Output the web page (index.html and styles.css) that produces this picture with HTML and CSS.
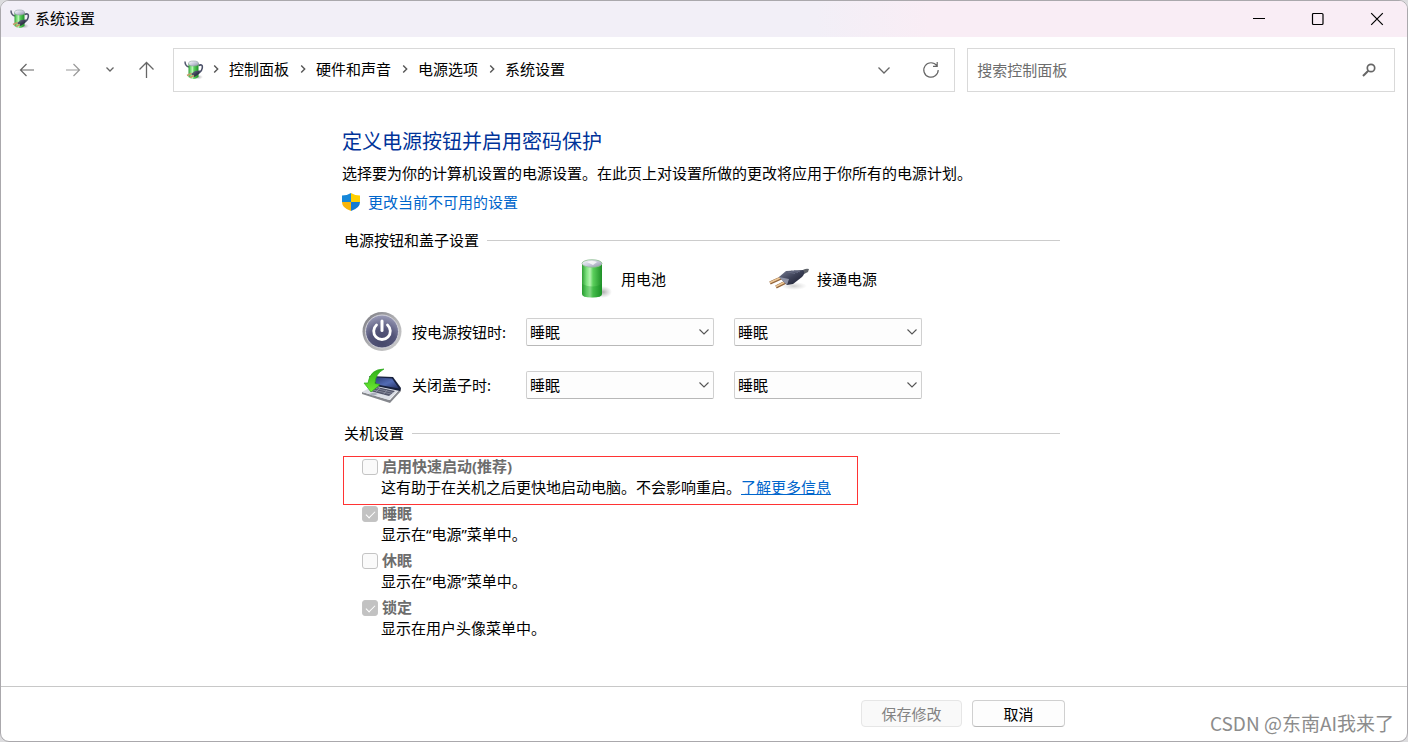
FILE: index.html
```html
<!DOCTYPE html>
<html lang="zh-CN">
<head>
<meta charset="utf-8">
<meta name="viewport" content="width=device-width, initial-scale=1">
<title>系统设置</title>
<link rel="stylesheet" href="styles.css">
</head>
<body>
<svg class="defs" aria-hidden="true">
  <defs>
    <linearGradient id="green" x1="0" x2="1" y1="0" y2="0">
      <stop offset="0" stop-color="#2f9e35"/><stop offset=".22" stop-color="#7be07c"/><stop offset=".4" stop-color="#b5f3b0"/><stop offset=".55" stop-color="#5bd05c"/><stop offset="1" stop-color="#1e8f27"/>
    </linearGradient>
    <linearGradient id="cap" x1="0" x2="1" y1="0" y2="1">
      <stop offset="0" stop-color="#ffffff"/><stop offset=".5" stop-color="#c9cbdc"/><stop offset="1" stop-color="#8f92a8"/>
    </linearGradient>
    <radialGradient id="shade"><stop offset="0" stop-color="#777" stop-opacity=".6"/><stop offset="1" stop-color="#999" stop-opacity="0"/></radialGradient>
    <linearGradient id="plug" x1="0" x2="1" y1="0" y2="1">
      <stop offset="0" stop-color="#7b8096"/><stop offset=".5" stop-color="#3c4056"/><stop offset="1" stop-color="#15182a"/>
    </linearGradient>
    <linearGradient id="ring" x1="0" x2="1" y1="0" y2="1">
      <stop offset="0" stop-color="#77777e"/><stop offset=".5" stop-color="#b0b0b3"/><stop offset="1" stop-color="#cfcfcf"/>
    </linearGradient>
    <radialGradient id="disc" cx=".5" cy=".85" r=".85">
      <stop offset="0" stop-color="#46486b"/><stop offset=".5" stop-color="#55567a"/><stop offset="1" stop-color="#9b9cb8"/>
    </radialGradient>
    <linearGradient id="screen" x1="0" x2="1" y1="0" y2="1">
      <stop offset="0" stop-color="#28366e"/><stop offset=".55" stop-color="#526bb4"/><stop offset="1" stop-color="#222e60"/>
    </linearGradient>
    <linearGradient id="arrow" x1="0" x2="0" y1="0" y2="1">
      <stop offset="0" stop-color="#2fae1a"/><stop offset="1" stop-color="#70ee32"/>
    </linearGradient>
    <symbol id="power-options" viewBox="0 0 20 20">
      <ellipse cx="14" cy="17" rx="5" ry="2.5" fill="url(#shade)"/>
      <path d="M1 1.500Q1 6 5 7" fill="none" stroke="#555a70" stroke-width="1.500"/>
      <path d="M14.500 5.500Q19 3.500 18.300 8Q18 11 15 13" fill="none" stroke="#4b5068" stroke-width="1.600"/>
      <path d="M4.500 3.500V17Q9.500 21 14.500 17V3.500Z" fill="url(#green)"/>
      <ellipse cx="9.500" cy="3.500" rx="5" ry="2.500" fill="url(#cap)" stroke="#8b9ca0" stroke-width=".6"/>
      <path d="M7 14L11 11L16 10.500L15 14L10.500 17Z" fill="url(#plug)"/>
      <path d="M3 15.500L7.500 13.500M6 17.500L10 15.500" stroke="#c79c69" stroke-width="1.500"/>
    </symbol>
    <symbol id="combo-arrow" viewBox="0 0 12 12"><path d="M1.500 3.500L6 8L10.500 3.500" fill="none" stroke="#555" stroke-width="1.100"/></symbol>
    <symbol id="crumb-arrow" viewBox="0 0 10 10"><path d="M3.200 1.500L6.700 5L3.200 8.500" fill="none" stroke="#555" stroke-width="1.400"/></symbol>
  </defs>
</svg>
<div class="window">
  <header class="titlebar">
    <svg class="app-icon" aria-hidden="true"><use href="#power-options"/></svg>
    <span class="titlebar-text">系统设置</span>
    <div class="window-buttons">
      <button type="button" aria-label="最小化"><svg width="14" height="14"><path d="M1 6.500H13" stroke="#000"/></svg></button>
      <button type="button" aria-label="最大化"><svg width="14" height="14"><rect x="1.500" y="1.500" width="10.500" height="11" rx="1" fill="none" stroke="#000" stroke-width="1.200"/></svg></button>
      <button type="button" aria-label="关闭"><svg width="14" height="14"><path d="M1.200 1.200L12.800 12.800M12.800 1.200L1.200 12.800" stroke="#000" stroke-width="1.200"/></svg></button>
    </div>
  </header>

  <div class="toolbar">
    <div class="history">
      <button type="button" aria-label="后退"><svg width="16" height="16"><path d="M15 8H1.500M7.500 2L1.500 8L7.500 14" fill="none" stroke="#666" stroke-width="1.200"/></svg></button>
      <button type="button" aria-label="前进"><svg width="16" height="16"><path d="M1 8H14.500M8.500 2L14.500 8L8.500 14" fill="none" stroke="#999" stroke-width="1.200"/></svg></button>
      <button type="button" class="recent" aria-label="最近的位置"><svg width="10" height="10"><path d="M1.500 2.500L5 6L8.500 2.500" fill="none" stroke="#666" stroke-width="1.300"/></svg></button>
      <button type="button" class="up" aria-label="向上"><svg width="17" height="18"><path d="M8.500 17V1.500M1.500 8.500L8.500 1.500L15.500 8.500" fill="none" stroke="#666" stroke-width="1.300"/></svg></button>
    </div>
    <div class="address">
      <svg class="app-icon" aria-hidden="true"><use href="#power-options"/></svg>
      <nav class="crumbs" aria-label="路径">
        <svg class="crumb-arrow"><use href="#crumb-arrow"/></svg><a href="#">控制面板</a>
        <svg class="crumb-arrow"><use href="#crumb-arrow"/></svg><a href="#">硬件和声音</a>
        <svg class="crumb-arrow"><use href="#crumb-arrow"/></svg><a href="#">电源选项</a>
        <svg class="crumb-arrow"><use href="#crumb-arrow"/></svg><a href="#">系统设置</a>
      </nav>
      <button type="button" aria-label="以前的位置"><svg width="14" height="14"><path d="M1.500 4.500L7 10L12.500 4.500" fill="none" stroke="#666" stroke-width="1.300"/></svg></button>
      <button type="button" aria-label="刷新"><svg width="18" height="18"><path d="M14.800 4.700A7.200 7.200 0 1 0 16.200 9M15.200 1V5.300H11" fill="none" stroke="#666" stroke-width="1.200"/></svg></button>
    </div>
    <form class="search">
      <input type="search" aria-label="搜索控制面板" placeholder="搜索控制面板">
      <button type="button" aria-label="搜索"><svg width="14" height="14"><circle cx="9" cy="5" r="3.700" fill="none" stroke="#666" stroke-width="1.700"/><path d="M6.300 7.700L1 13" stroke="#666" stroke-width="2"/></svg></button>
    </form>
  </div>

  <main class="content">
    <h1>定义电源按钮并启用密码保护</h1>
    <p class="intro">选择要为你的计算机设置的电源设置。在此页上对设置所做的更改将应用于你所有的电源计划。</p>
    <a class="admin-link" href="#">
      <svg width="18" height="18" viewBox="0 0 18 18" aria-hidden="true">
        <path d="M9 0Q5 2.500 0 2.500V9H9Z" fill="#1687d9"/><path d="M9 0Q13 2.500 18 2.500V9H9Z" fill="#ffcf00"/>
        <path d="M0 9Q0 15 9 18V9Z" fill="#f9b50b"/><path d="M18 9Q18 15 9 18V9Z" fill="#147bd1"/>
      </svg>
      更改当前不可用的设置</a>

    <section>
      <h2 class="section-head">电源按钮和盖子设置</h2>
      <div class="power-grid">
        <div class="source battery" id="on-battery">
          <svg width="40" height="40" viewBox="0 0 40 40" aria-hidden="true">
            <ellipse cx="30" cy="33" rx="9" ry="6" fill="url(#shade)"/>
            <path d="M9 5V35Q9 38.500 19 38.500T29 35V5Z" fill="url(#green)"/>
            <path d="M9 25V35Q9 38.500 19 38.500T29 35V25Q20 30 9 25Z" fill="#119220" opacity=".3"/>
            <ellipse cx="19" cy="4.500" rx="10" ry="3.800" fill="url(#cap)" stroke="#8dbd91" stroke-width=".8"/>
            <path d="M14 3Q19 1 24 3L20 6Z" fill="#fff" opacity=".75"/>
          </svg>
          <span>用电池</span>
        </div>
        <div class="source mains" id="plugged-in">
          <svg width="40" height="40" viewBox="0 0 40 40" aria-hidden="true">
            <ellipse cx="25" cy="27" rx="13" ry="4" fill="url(#shade)" opacity=".6"/>
            <path d="M32 13Q35 9 40 10L39 13L35 15Z" fill="#60646a"/>
            <path d="M1 24L12 19M7 28L17 23" stroke="#93643a" stroke-width="3.200"/>
            <path d="M1 23.500L12 18.500M7 27.500L17 22.500" stroke="#ebc798" stroke-width="1.600"/>
            <path d="M10 18L17 12L34 11Q37 14 33 18L24 25L18 26Z" fill="url(#plug)"/>
            <path d="M10 18L20 20L18 26Z" fill="#8f93a6"/>
            <path d="M19 13L26 14.500M22 12L29 13.500M25 11.500L31 12.800" stroke="#6b7088" stroke-width=".8"/>
          </svg>
          <span>接通电源</span>
        </div>

        <div class="action" id="power-button">
          <svg width="40" height="40" viewBox="0 0 40 40" aria-hidden="true">
            <circle cx="20" cy="19.500" r="19.500" fill="url(#ring)"/>
            <circle cx="20" cy="19.500" r="16.500" fill="url(#disc)" stroke="#d4d4dc" stroke-width="1"/>
            <path d="M14.500 13A8.300 8.300 0 1 0 25.500 13" fill="none" stroke="#fff" stroke-width="2.800" stroke-linecap="round"/>
            <path d="M20 9V18.500" stroke="#fff" stroke-width="3" stroke-linecap="round"/>
          </svg>
          <span>按电源按钮时:</span>
        </div>
        <div class="combo"><select aria-labelledby="power-button on-battery"><option>睡眠</option></select><svg><use href="#combo-arrow"/></svg></div>
        <div class="combo"><select aria-labelledby="power-button plugged-in"><option>睡眠</option></select><svg><use href="#combo-arrow"/></svg></div>

        <div class="action" id="lid-close">
          <svg width="40" height="40" viewBox="0 0 40 40" aria-hidden="true">
            <path d="M0 27L28 35L39 23V26L28 38L0 29Z" fill="#85878d"/>
            <path d="M0 27L13 20L38 24L27 35Z" fill="#dcdfe6"/>
            <path d="M8 26L15 22L33 26L27 31Z" fill="#51556a"/>
            <path d="M11 25L29 29M14 23.500L31 27.500M13 28L18 23M21 30L25 25" stroke="#a2a6b6" stroke-width=".6"/>
            <path d="M7 29L12 27.500L16 29L11 31Z" fill="#a9aeba"/>
            <path d="M7 11L31 12L39 23L38 26L14 21Z" fill="#17203c"/>
            <path d="M10 12L30 13.500L37 23.500L15 19.500Z" fill="url(#screen)"/>
            <path d="M22 4Q8 4 6 18L2 18L9 27L18 19.500L13 18.500Q13 9 22 4Z" fill="url(#arrow)" stroke="#2caa1d" stroke-width=".7"/>
          </svg>
          <span>关闭盖子时:</span>
        </div>
        <div class="combo"><select aria-labelledby="lid-close on-battery"><option>睡眠</option></select><svg><use href="#combo-arrow"/></svg></div>
        <div class="combo"><select aria-labelledby="lid-close plugged-in"><option>睡眠</option></select><svg><use href="#combo-arrow"/></svg></div>
      </div>
    </section>

    <section>
      <h2 class="section-head">关机设置</h2>
      <div class="options">
        <div class="option">
          <input type="checkbox" id="fast" disabled><label for="fast">启用快速启动(推荐)</label>
          <p>这有助于在关机之后更快地启动电脑。不会影响重启。<a href="#">了解更多信息</a></p>
          <div class="marker"></div>
        </div>
        <div class="option">
          <input type="checkbox" id="sleep" checked disabled><label for="sleep">睡眠</label>
          <p>显示在“电源”菜单中。</p>
        </div>
        <div class="option">
          <input type="checkbox" id="hibernate" disabled><label for="hibernate">休眠</label>
          <p>显示在“电源”菜单中。</p>
        </div>
        <div class="option">
          <input type="checkbox" id="lock" checked disabled><label for="lock">锁定</label>
          <p>显示在用户头像菜单中。</p>
        </div>
      </div>
    </section>
  </main>

  <footer class="footer">
    <div class="footer-buttons">
      <button type="button" class="save" disabled>保存修改</button>
      <button type="button" class="cancel">取消</button>
    </div>
  </footer>
  <span class="watermark">CSDN @东南AI我来了</span>
</div>
</body>
</html>
```
FILE: styles.css
```css
* { box-sizing: border-box; }

body {
  margin: 0;
  background: #dcdcde;
  color: #000;
  font: 15px/22px "Noto Sans", "Noto Sans CJK SC", sans-serif;
}

h1, h2, p { margin: 0; font-weight: 400; }

button {
  display: flex;
  align-items: center;
  justify-content: center;
  padding: 0;
  border: 0;
  background: none;
  color: inherit;
  font: inherit;
}

svg { display: block; flex: none; }

.defs { position: absolute; width: 0; height: 0; }

.window {
  position: relative;
  display: flex;
  flex-direction: column;
  min-height: 100vh;
  overflow: hidden;
  border: 1px solid #aaa8ac;
  border-radius: 9px;
  background: #fff;
}

/* Title bar */
.titlebar {
  display: flex;
  align-items: center;
  height: 36px;
  padding: 0 1px 0 9px;
  background: linear-gradient(90deg, #f2eff7 58%, #f9edf5 66%);
}
.app-icon { width: 20px; height: 20px; }
.titlebar-text { margin-left: 5px; line-height: 20px; padding-bottom: 2px; }
.window-buttons { display: flex; margin-left: auto; }
.window-buttons button { width: 59px; height: 36px; }

/* Navigation */
.toolbar {
  display: flex;
  gap: 11px;
  padding: 11px 12px 0 9px;
}
.history { display: flex; gap: 12px; }
.history button { width: 34px; }
.history .recent { width: 16px; }
.history .up { width: 32px; }
.address, .search {
  display: flex;
  align-items: center;
  min-width: 0;
  height: 44px;
  border: 1px solid #d9d9d9;
}
.address { flex: 771 1 0; padding: 0 0 0 10px; }
.address button { width: 47px; height: 42px; }
.crumbs { display: flex; align-items: center; margin-right: auto; padding-bottom: 2px; white-space: nowrap; }
.crumbs a { color: #000; text-decoration: none; }
.crumb-arrow { width: 10px; height: 10px; margin: 0 8px 0 9px; }
.crumb-arrow:first-child { margin-left: 7px; }
.search { flex: 417 1 0; margin-left: 1px; padding-left: 9px; }
.search input {
  flex: 1;
  min-width: 0;
  height: 42px;
  padding: 0;
  border: 0;
  outline: 0;
  background: none;
  font: inherit;
}
.search input::placeholder { color: #6d6d6d; opacity: 1; }
.search button { width: 50px; height: 42px; }

/* Page */
.content {
  flex: 1;
  width: 100%;
  max-width: 724px;
  margin: 0 auto;
  padding-top: 36px;
}
h1 { color: #003399; font-size: 20px; line-height: 28px; }
.intro { margin-top: 6px; }
.admin-link {
  display: flex;
  align-items: center;
  gap: 8px;
  width: fit-content;
  margin-top: 7px;
  color: #0066cc;
  text-decoration: none;
}
.section-head {
  display: flex;
  align-items: center;
  gap: 8px;
  margin-top: 16px;
  padding: 0 6px 0 2px;
  font-size: 15px;
}
.section-head::after { content: ""; flex: 1; height: 1px; background: #ccc; }

.power-grid {
  display: grid;
  grid-template-columns: 144px 188px 188px;
  align-items: center;
  gap: 13px 20px;
  margin-top: 8px;
  padding: 0 0 1px 20px;
}
.source, .action { display: flex; align-items: center; white-space: nowrap; }
.source { gap: 8px; }
.action { gap: 10px; }
.battery { grid-column: 2; padding-left: 47px; }
.mains { padding-left: 35px; }
.combo { position: relative; }
.combo select {
  display: block;
  width: 100%;
  height: 28px;
  padding: 0 24px 0 3px;
  appearance: none;
  border: 1px solid #d0d0d0;
  border-bottom-color: #b8b8b8;
  border-radius: 2px;
  background: #fdfdfd;
  color: #000;
  font: inherit;
}
.combo svg {
  position: absolute;
  top: 8px;
  right: 4px;
  width: 12px;
  height: 12px;
  pointer-events: none;
}

.options { margin-top: 12px; }
.option {
  position: relative;
  display: grid;
  grid-template-columns: 16px 1fr;
  align-items: end;
  column-gap: 4px;
  padding: 0 0 5px 20px;
}
.option label { color: #6d6d6d; font-weight: 700; line-height: 20px; }
.option p { grid-column: 1 / -1; padding-left: 19px; }
.option a { color: #0066cc; }
.option input {
  display: grid;
  place-items: center;
  width: 16px;
  height: 16px;
  margin: 0 0 1px;
  appearance: none;
  border: 1px solid #c4c4c4;
  border-radius: 3px;
  background: #fafafa;
}
.option input:checked { background: #c2c2c2; }
.option input:checked::before {
  content: "";
  width: 8px;
  height: 4px;
  margin-bottom: 2px;
  border: solid #fff;
  border-width: 0 0 1px 1px;
  rotate: -45deg;
}
.marker {
  position: absolute;
  inset: 0 auto -2px 1px;
  width: 515px;
  border: 1px solid #ff3333;
  pointer-events: none;
}

/* Footer */
.footer { padding: 13px 0 14px; border-top: 1px solid #c8c8c8; }
.footer-buttons {
  display: flex;
  justify-content: flex-end;
  gap: 10px;
  max-width: 722px;
  margin: 0 auto;
}
.footer button {
  height: 27px;
  border: 1px solid #d0d0d0;
  border-bottom-color: #b8b8b8;
  border-radius: 4px;
  background: #fdfdfd;
}
.footer .save { width: 101px; border-color: #e6e6e6; background: #f9f9f9; color: #838383; }
.footer .cancel { width: 93px; }

.watermark {
  position: absolute;
  right: 13px;
  bottom: 6px;
  color: #8c8c8c;
  font: 19px/24px "Noto Sans CJK SC", sans-serif;
}
```
